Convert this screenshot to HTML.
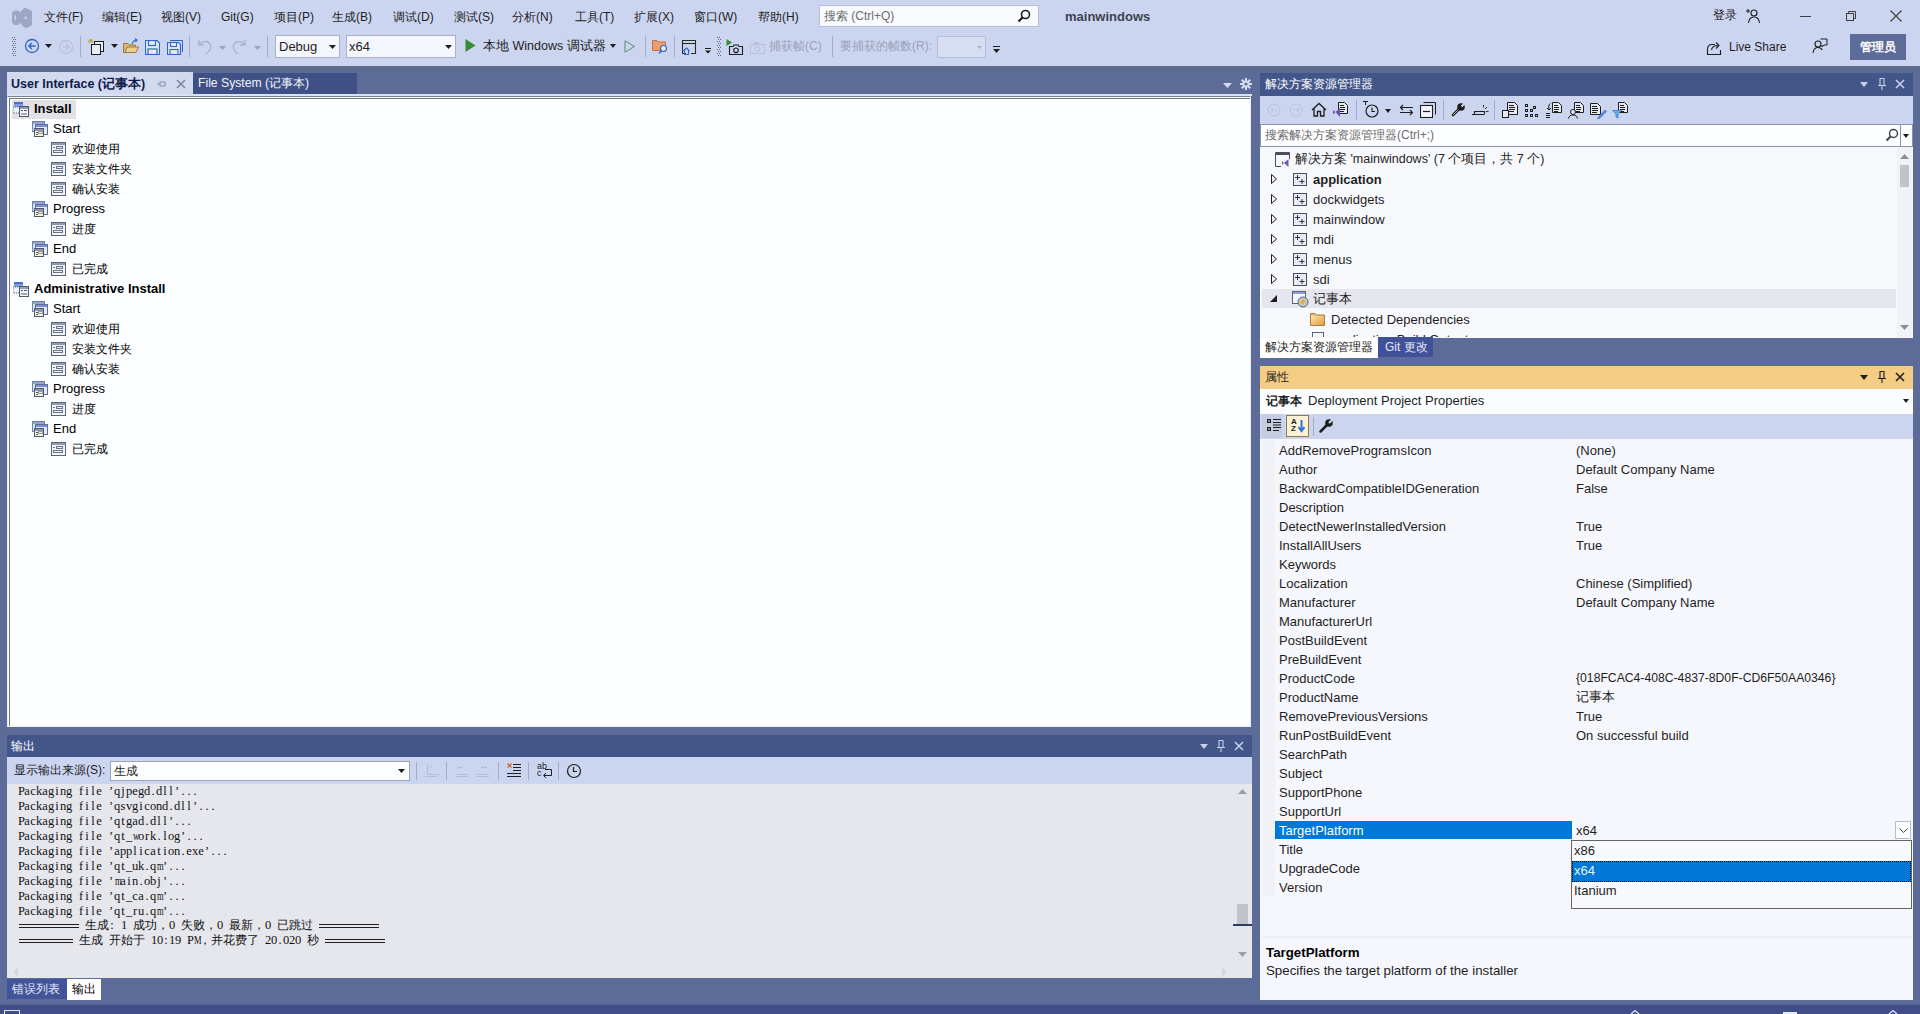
<!DOCTYPE html>
<html><head><meta charset="utf-8">
<style>
*{box-sizing:border-box;margin:0;padding:0}
html,body{width:1920px;height:1014px;overflow:hidden}
body{position:relative;background:#5D6B99;font-family:"Liberation Sans",sans-serif;font-size:13px;color:#1E1E1E}
.a{position:absolute}
.t{position:absolute;white-space:pre;line-height:1}
.mo{font-family:"Liberation Serif",serif;font-size:12.5px;color:#111}
.mo i{font-style:normal;display:inline-block;width:6px;text-align:center}
.mo i.w{transform:scaleX(0.68)}
.mo b{font-weight:normal;display:inline-block;width:12px;text-align:center;font-family:"Liberation Sans",sans-serif;font-size:12px}
</style></head><body>
<!-- command bar -->
<div class="a" style="left:0;top:0;width:1920px;height:66px;background:#CCD5F0"></div>
<div class="a" style="left:0;top:66px;width:1920px;height:7px;background:linear-gradient(#616C8C,#5B6995)"></div>

<!-- CMDBAR CONTENT -->
<svg class="a" style="left:11px;top:7px" width="22" height="22" viewBox="0 0 22 22"><path d="M1 5.5 L3.5 3.5 L7 3.5 L9 5.5 L13 1 L15 1 L21 4 V18 L16 21 L13.5 20.5 L9 16 L7 18 L3.5 18 L1 15.5 Z M3.5 8.5 V13 H5 V8.5 Z M13 10.8 L15.5 8.5 V13 Z" fill="#9EA6C6" fill-rule="evenodd"/></svg>
<div class="t" style="left:44px;top:11px;font-size:12px;color:#1E1E1E">文件(F)</div>
<div class="t" style="left:102px;top:11px;font-size:12px;color:#1E1E1E">编辑(E)</div>
<div class="t" style="left:161px;top:11px;font-size:12px;color:#1E1E1E">视图(V)</div>
<div class="t" style="left:221px;top:11px;font-size:12px;color:#1E1E1E">Git(G)</div>
<div class="t" style="left:274px;top:11px;font-size:12px;color:#1E1E1E">项目(P)</div>
<div class="t" style="left:332px;top:11px;font-size:12px;color:#1E1E1E">生成(B)</div>
<div class="t" style="left:393px;top:11px;font-size:12px;color:#1E1E1E">调试(D)</div>
<div class="t" style="left:454px;top:11px;font-size:12px;color:#1E1E1E">测试(S)</div>
<div class="t" style="left:512px;top:11px;font-size:12px;color:#1E1E1E">分析(N)</div>
<div class="t" style="left:575px;top:11px;font-size:12px;color:#1E1E1E">工具(T)</div>
<div class="t" style="left:634px;top:11px;font-size:12px;color:#1E1E1E">扩展(X)</div>
<div class="t" style="left:694px;top:11px;font-size:12px;color:#1E1E1E">窗口(W)</div>
<div class="t" style="left:758px;top:11px;font-size:12px;color:#1E1E1E">帮助(H)</div>
<div class="a" style="left:819px;top:5px;width:220px;height:22px;background:#F8FAFE;border:1px solid #B4BCD6"></div>
<div class="t" style="left:824px;top:10px;font-size:12px;color:#6D6D6D">搜索 (Ctrl+Q)</div>
<svg class="a" style="left:1017px;top:9px" width="14" height="14" viewBox="0 0 14 14"><circle cx="8.5" cy="5.5" r="4" fill="none" stroke="#1E1E1E" stroke-width="1.6"/><path d="M5.8 8.2 L1.5 12.5" stroke="#1E1E1E" stroke-width="2.2"/></svg>
<div class="t" style="left:1065px;top:10px;font-size:13px;font-weight:bold;color:#3C4250">mainwindows</div>
<div class="t" style="left:1713px;top:9px;font-size:12px;color:#1E1E1E">登录</div>
<svg class="a" style="left:1745px;top:8px" width="16" height="16" viewBox="0 0 16 16"><circle cx="9" cy="5" r="3" fill="none" stroke="#1E1E1E" stroke-width="1.1"/><path d="M3.5 15 C4 10.5 6 9 9 9 C12 9 14 10.5 14.5 15" fill="none" stroke="#1E1E1E" stroke-width="1.1"/><path d="M1 3 H5 M3 1 V5" stroke="#1E1E1E" stroke-width="1"/></svg>
<div class="a" style="left:1800px;top:16px;width:11px;height:1px;background:#3C3C3C"></div>
<svg class="a" style="left:1845px;top:10px" width="12" height="12" viewBox="0 0 12 12"><rect x="1.5" y="3.5" width="7" height="7" fill="none" stroke="#3C3C3C"/><path d="M3.5 3.5 V1.5 H10.5 V8.5 H8.5" fill="none" stroke="#3C3C3C"/></svg>
<svg class="a" style="left:1890px;top:10px" width="12" height="12" viewBox="0 0 12 12"><path d="M0.5 0.5 L11.5 11.5 M11.5 0.5 L0.5 11.5" stroke="#3C3C3C" stroke-width="1.1"/></svg>
<svg class="a" style="left:11px;top:37px" width="6" height="20" viewBox="0 0 6 20"><g fill="#5A6480"><rect x="1" y="0" width="1" height="1"/><rect x="3" y="0" width="1" height="1"/><rect x="2" y="2" width="1" height="1"/><rect x="4" y="2" width="1" height="1"/><rect x="1" y="4" width="1" height="1"/><rect x="3" y="4" width="1" height="1"/><rect x="2" y="6" width="1" height="1"/><rect x="4" y="6" width="1" height="1"/><rect x="1" y="8" width="1" height="1"/><rect x="3" y="8" width="1" height="1"/><rect x="2" y="10" width="1" height="1"/><rect x="4" y="10" width="1" height="1"/><rect x="1" y="12" width="1" height="1"/><rect x="3" y="12" width="1" height="1"/><rect x="2" y="14" width="1" height="1"/><rect x="4" y="14" width="1" height="1"/><rect x="1" y="16" width="1" height="1"/><rect x="3" y="16" width="1" height="1"/><rect x="2" y="18" width="1" height="1"/><rect x="4" y="18" width="1" height="1"/></g></svg>
<svg class="a" style="left:24px;top:38px" width="16" height="16" viewBox="0 0 16 16"><circle cx="8" cy="8" r="6.5" fill="none" stroke="#2D66C4" stroke-width="1.3"/><path d="M11.5 8 H5 M7.8 5 L4.8 8 L7.8 11" fill="none" stroke="#2D66C4" stroke-width="1.3"/></svg>
<svg class="a" style="left:45px;top:44px" width="7" height="4"><path d="M0 0 H7 L3.5 4 Z" fill="#1E1E1E"/></svg>
<svg class="a" style="left:58px;top:39px" width="16" height="16" viewBox="0 0 16 16"><circle cx="8" cy="8" r="6.5" fill="none" stroke="#B9C0D6" stroke-width="1.3"/><path d="M4.5 8 H11 M8.2 5 L11.2 8 L8.2 11" fill="none" stroke="#B9C0D6" stroke-width="1.3"/></svg>
<div class="a" style="left:80px;top:36px;width:1px;height:21px;background:#A4ADC8"></div>
<svg class="a" style="left:88px;top:38px" width="18" height="17" viewBox="0 0 18 17"><path d="M2 1 L4 5 M0 3 H5 M4 1 L1 5" stroke="#C39A2A" stroke-width="1"/><rect x="6.5" y="3.5" width="9" height="10" fill="#E8ECF6" stroke="#1E1E1E"/><rect x="3.5" y="6.5" width="9" height="10" fill="#E8ECF6" stroke="#1E1E1E"/></svg>
<svg class="a" style="left:111px;top:44px" width="7" height="4"><path d="M0 0 H7 L3.5 4 Z" fill="#1E1E1E"/></svg>
<svg class="a" style="left:123px;top:38px" width="16" height="16" viewBox="0 0 16 16"><path d="M0.5 5.5 H5 L6 7 H12.5 V14.5 H0.5 Z" fill="#DCB67A" stroke="#9C7A3C"/><path d="M2 14.5 L4 9 H15.5 L13 14.5 Z" fill="#F0CC8A" stroke="#9C7A3C"/><path d="M9 6 C10 3 12 2 14 2 M12 0.5 L14 2 L12.5 4" fill="none" stroke="#2D66C4" stroke-width="1.2"/></svg>
<svg class="a" style="left:145px;top:40px" width="15" height="15" viewBox="0 0 15 15"><path d="M0.5 0.5 H12 L14.5 3 V14.5 H0.5 Z" fill="#E4EAF8" stroke="#2D66C4" stroke-width="1.2"/><rect x="3.5" y="0.5" width="7" height="5" fill="none" stroke="#2D66C4" stroke-width="1.2"/><rect x="3" y="9" width="9" height="5.5" fill="none" stroke="#2D66C4" stroke-width="1.2"/></svg>
<svg class="a" style="left:167px;top:40px" width="16" height="15" viewBox="0 0 16 15"><path d="M3 0.5 H15.5 V12" fill="none" stroke="#2D66C4" stroke-width="1"/><path d="M0.5 2.5 H11.5 L13.5 4.5 V14.5 H0.5 Z" fill="#E4EAF8" stroke="#2D66C4" stroke-width="1.2"/><rect x="3.5" y="2.5" width="6" height="4" fill="none" stroke="#2D66C4" stroke-width="1.1"/><rect x="3" y="9.5" width="8" height="5" fill="none" stroke="#2D66C4" stroke-width="1.1"/></svg>
<div class="a" style="left:189px;top:36px;width:1px;height:21px;background:#A4ADC8"></div>
<svg class="a" style="left:198px;top:39px" width="14" height="16" viewBox="0 0 14 16"><path d="M1 1 V6 H6 M1.5 5.5 C4 2 9 1.5 11.5 4.5 C14 8 12 12 8 15" fill="none" stroke="#A9B2CC" stroke-width="1.3"/></svg>
<svg class="a" style="left:219px;top:46px" width="7" height="4"><path d="M0 0 H7 L3.5 4 Z" fill="#9AA3BE"/></svg>
<svg class="a" style="left:232px;top:39px" width="14" height="16" viewBox="0 0 14 16"><path d="M13 1 V6 H8 M12.5 5.5 C10 2 5 1.5 2.5 4.5 C0 8 2 12 6 15" fill="none" stroke="#A9B2CC" stroke-width="1.3"/></svg>
<svg class="a" style="left:254px;top:46px" width="7" height="4"><path d="M0 0 H7 L3.5 4 Z" fill="#9AA3BE"/></svg>
<div class="a" style="left:267px;top:36px;width:1px;height:21px;background:#A4ADC8"></div>
<div class="a" style="left:275px;top:35px;width:65px;height:23px;background:#F4F7FD;border:1px solid #A9B0C8"></div>
<div class="t" style="left:279px;top:40px;font-size:13px;color:#1E1E1E">Debug</div>
<svg class="a" style="left:329px;top:45px" width="7" height="4"><path d="M0 0 H7 L3.5 4 Z" fill="#1E1E1E"/></svg>
<div class="a" style="left:346px;top:35px;width:110px;height:23px;background:#F4F7FD;border:1px solid #A9B0C8"></div>
<div class="t" style="left:349px;top:40px;font-size:13px;color:#1E1E1E">x64</div>
<svg class="a" style="left:445px;top:45px" width="7" height="4"><path d="M0 0 H7 L3.5 4 Z" fill="#1E1E1E"/></svg>
<svg class="a" style="left:465px;top:39px" width="11" height="13"><path d="M0.5 0 L10.5 6.5 L0.5 13 Z" fill="#388A34"/></svg>
<div class="t" style="left:483px;top:40px;font-size:12.5px;color:#1E1E1E">本地 Windows 调试器</div>
<svg class="a" style="left:610px;top:44px" width="6" height="4"><path d="M0 0 H6 L3 4 Z" fill="#1E1E1E"/></svg>
<svg class="a" style="left:624px;top:40px" width="12" height="13"><path d="M1 0.8 L10.5 6.5 L1 12.2 Z" fill="none" stroke="#5C8C6A" stroke-width="1"/></svg>
<div class="a" style="left:645px;top:36px;width:1px;height:21px;background:#A4ADC8"></div>
<svg class="a" style="left:652px;top:39px" width="17" height="16" viewBox="0 0 17 16"><path d="M0.5 1.5 H5 L6.5 3 H13.5 V11.5 H0.5 Z" fill="#E8A070" stroke="#C07040"/><circle cx="11.5" cy="9.5" r="3" fill="#E4ECF8" stroke="#2D66C4" stroke-width="1.1"/><path d="M9.5 11.5 L7 14.5" stroke="#2D66C4" stroke-width="1.3"/></svg>
<div class="a" style="left:674px;top:36px;width:1px;height:21px;background:#A4ADC8"></div>
<svg class="a" style="left:682px;top:40px" width="16" height="15" viewBox="0 0 16 15"><path d="M4 13.5 H0.5 V0.5 H13.5 V13.5 H9" fill="none" stroke="#2A2A2A" stroke-width="1.1"/><path d="M0.5 3.5 H13.5" stroke="#2A2A2A" stroke-width="1.1"/><path d="M1.5 11 L4.5 8 L7.5 11 M2.5 10 V14.5 H6.5 V10" fill="none" stroke="#2D66C4" stroke-width="1.1"/></svg>
<svg class="a" style="left:705px;top:48px" width="6" height="6"><path d="M0 0.5 H6" stroke="#1E1E1E"/><path d="M0 2.5 H6 L3 5.5 Z" fill="#1E1E1E"/></svg>
<svg class="a" style="left:716px;top:37px" width="6" height="20" viewBox="0 0 6 20"><g fill="#5A6480"><rect x="1" y="0" width="1" height="1"/><rect x="3" y="0" width="1" height="1"/><rect x="2" y="2" width="1" height="1"/><rect x="4" y="2" width="1" height="1"/><rect x="1" y="4" width="1" height="1"/><rect x="3" y="4" width="1" height="1"/><rect x="2" y="6" width="1" height="1"/><rect x="4" y="6" width="1" height="1"/><rect x="1" y="8" width="1" height="1"/><rect x="3" y="8" width="1" height="1"/><rect x="2" y="10" width="1" height="1"/><rect x="4" y="10" width="1" height="1"/><rect x="1" y="12" width="1" height="1"/><rect x="3" y="12" width="1" height="1"/><rect x="2" y="14" width="1" height="1"/><rect x="4" y="14" width="1" height="1"/><rect x="1" y="16" width="1" height="1"/><rect x="3" y="16" width="1" height="1"/><rect x="2" y="18" width="1" height="1"/><rect x="4" y="18" width="1" height="1"/></g></svg>
<svg class="a" style="left:726px;top:39px" width="18" height="16" viewBox="0 0 18 16"><path d="M0.5 0 L6 3.5 L0.5 7 Z" fill="#388A34"/><path d="M3.5 15.5 V7.5 H7 L8 6 H12 L13 7.5 H16.5 V15.5 Z" fill="none" stroke="#1E1E1E" stroke-width="1.1"/><circle cx="10" cy="11.3" r="2.3" fill="none" stroke="#1E1E1E" stroke-width="1.1"/></svg>
<svg class="a" style="left:750px;top:41px" width="15" height="13" viewBox="0 0 15 13"><rect x="0.5" y="3.5" width="14" height="9" fill="none" stroke="#B9C0D6"/><rect x="4" y="1" width="5" height="2" fill="#B9C0D6"/><circle cx="7.5" cy="8" r="2.5" fill="none" stroke="#B9C0D6"/></svg>
<div class="t" style="left:769px;top:40px;font-size:12px;color:#9AA1B8">捕获帧(C)</div>
<div class="a" style="left:832px;top:36px;width:1px;height:21px;background:#A4ADC8"></div>
<div class="t" style="left:840px;top:40px;font-size:12px;color:#9AA1B8">要捕获的帧数(R):</div>
<div class="a" style="left:937px;top:36px;width:49px;height:22px;background:#D8DEF2;border:1px solid #B4BCD6"></div>
<svg class="a" style="left:977px;top:46px" width="5" height="3"><path d="M0 0 H5 L2.5 3 Z" fill="#A9B0C8"/></svg>
<svg class="a" style="left:993px;top:46px" width="7" height="8"><path d="M0 0.5 H7" stroke="#1E1E1E"/><path d="M0 3 H7 L3.5 7 Z" fill="#1E1E1E"/></svg>
<svg class="a" style="left:1706px;top:40px" width="17" height="15" viewBox="0 0 17 15"><path d="M9 4.5 H6 C3 4.5 1.5 6.5 1.5 9 V14.5 H14.5 V10" fill="none" stroke="#1E1E1E" stroke-width="1.1"/><path d="M5.5 10 C6 7 8 5.5 12 5.5 M10 2.5 L13 5.5 L10 8.5" fill="none" stroke="#1E1E1E" stroke-width="1.1"/></svg>
<div class="t" style="left:1729px;top:41px;font-size:12px;color:#1E1E1E">Live Share</div>
<svg class="a" style="left:1812px;top:38px" width="16" height="16" viewBox="0 0 16 16"><circle cx="6" cy="6" r="3" fill="none" stroke="#1E1E1E" stroke-width="1.1"/><path d="M1 15 C1.5 11 3 9.5 6 9.5 C8 9.5 9.5 10.5 10 12" fill="none" stroke="#1E1E1E" stroke-width="1.1"/><path d="M8.5 1 H15 V7 H12 L10 9 V7" fill="none" stroke="#1E1E1E" stroke-width="1"/></svg>
<div class="a" style="left:1850px;top:34px;width:56px;height:26px;background:#5D6B99"></div>
<div class="t" style="left:1860px;top:41px;font-size:12px;font-weight:bold;color:#FFFFFF">管理员</div>

<!-- document well -->
<div class="a" id="docwell" style="left:7px;top:72px;width:1245px;height:655px;background:#5D6B99">
</div>
<!-- selected doc tab -->
<div class="a" style="left:7px;top:72px;width:186px;height:23px;background:#D3DAF0"></div>
<div class="a" style="left:193px;top:73px;width:164px;height:21px;background:#3E5086"></div>
<div class="a" style="left:7px;top:94px;width:1245px;height:2px;background:#DCE2F4"></div>
<div class="a" style="left:7px;top:96px;width:1244px;height:631px;background:#FDFEFF;border-top:1px solid #7A8090;border-left:1px solid #E8ECF8;border-right:1px solid #E8ECF8;border-bottom:1px solid #F0F2FA"></div>
<div class="a" style="left:9px;top:98px;width:1241px;height:628px;background:#FDFEFF;border-top:1px solid #6C7A72;border-left:1px solid #6C7A72"></div>

<!-- DOC CONTENT -->
<svg width="0" height="0" style="position:absolute">
<defs>
<g id="ic2"><rect x="0.5" y="0.5" width="14" height="13" fill="#F2F4F8" stroke="#5A6478"/><rect x="1" y="1" width="13" height="2" fill="#8E9CB8"/><rect x="5.5" y="4.5" width="6" height="2" fill="none" stroke="#6A7488"/><rect x="2" y="5" width="2" height="1" fill="#6A7488"/><rect x="2.5" y="8.5" width="9" height="2" fill="none" stroke="#6A7488"/></g>
<g id="ic1"><rect x="0.5" y="0.5" width="12" height="10" fill="#DCE6F8" stroke="#6E82AC"/><rect x="1" y="1" width="11" height="2" fill="#90A6D0"/><rect x="3.5" y="3.5" width="12" height="10" fill="#E4ECFA" stroke="#5C6EA0"/><rect x="4" y="4" width="11" height="2" fill="#7D8FD0"/><rect x="2.5" y="7.5" width="9" height="8" fill="#F2F2DE" stroke="#4E5868"/><rect x="3" y="8" width="8" height="2" fill="#8A96B8"/><rect x="4" y="11" width="2" height="1" fill="#4E5868"/><rect x="6.5" y="10.5" width="4" height="2" fill="none" stroke="#9AA080"/><rect x="4" y="13" width="2" height="1" fill="#4E5868"/></g>
<g id="ic0"><rect x="1" y="0" width="9" height="7" fill="#7E9EE0"/><rect x="1" y="0" width="9" height="2" fill="#4E6EC8"/><rect x="0" y="5" width="7" height="6" fill="#EEF2FA" stroke="#5A6478" stroke-dasharray="1 1"/><rect x="6.5" y="4.5" width="9" height="10" fill="#F4F6FA" stroke="#4E5868"/><rect x="7" y="5" width="8" height="2" fill="#8E9CB8"/><rect x="8" y="8" width="2" height="1" fill="#4E5868"/><rect x="11" y="8" width="3" height="1" fill="#4E5868"/><rect x="8" y="11" width="6" height="2" fill="#A0A8B8"/></g>
</defs></svg>
<div class="t" style="left:11px;top:78px;font-size:12.5px;font-weight:bold;color:#0E1C4C">User Interface (记事本)</div>
<svg class="a" style="left:157px;top:79px" width="10" height="10" viewBox="0 0 10 10"><path d="M0 5 H3 M3 2.5 V7.5 M3 3 H8 V7 H3 M8 5 H9" fill="none" stroke="#8890A8" stroke-width="1"/></svg>
<svg class="a" style="left:176px;top:79px" width="10" height="10" viewBox="0 0 10 10"><path d="M1 1 L9 9 M9 1 L1 9" stroke="#7E859C" stroke-width="1.6"/></svg>
<div class="t" style="left:198px;top:77px;font-size:12.2px;color:#F2F4FC">File System (记事本)</div>
<svg class="a" style="left:1223px;top:83px" width="9" height="5"><path d="M0 0 H9 L4.5 5 Z" fill="#D6DCF2"/></svg>
<svg class="a" style="left:1240px;top:78px" width="12" height="12" viewBox="0 0 12 12"><g fill="#D6DCF2"><circle cx="6" cy="6" r="3.6"/><rect x="5" y="0" width="2" height="12"/><rect x="0" y="5" width="12" height="2"/><rect x="5" y="0" width="2" height="12" transform="rotate(45 6 6)"/><rect x="5" y="0" width="2" height="12" transform="rotate(-45 6 6)"/></g><circle cx="6" cy="6" r="1.6" fill="#5D6B99"/></svg>
<div class="a" style="left:12px;top:100px;width:64px;height:19px;background:#E2E2E6"></div>
<svg class="a" style="left:13px;top:102px" width="16" height="16"><use href="#ic0"/></svg>
<div class="t" style="left:34px;top:102px;font-size:13px;font-weight:bold;color:#000">Install</div>
<svg class="a" style="left:32px;top:121px" width="16" height="16"><use href="#ic1"/></svg>
<div class="t" style="left:53px;top:122px;font-size:13px;color:#000">Start</div>
<svg class="a" style="left:51px;top:142px" width="15" height="14"><use href="#ic2"/></svg>
<div class="t" style="left:72px;top:143px;font-size:12px;color:#000">欢迎使用</div>
<svg class="a" style="left:51px;top:162px" width="15" height="14"><use href="#ic2"/></svg>
<div class="t" style="left:72px;top:163px;font-size:12px;color:#000">安装文件夹</div>
<svg class="a" style="left:51px;top:182px" width="15" height="14"><use href="#ic2"/></svg>
<div class="t" style="left:72px;top:183px;font-size:12px;color:#000">确认安装</div>
<svg class="a" style="left:32px;top:201px" width="16" height="16"><use href="#ic1"/></svg>
<div class="t" style="left:53px;top:202px;font-size:13px;color:#000">Progress</div>
<svg class="a" style="left:51px;top:222px" width="15" height="14"><use href="#ic2"/></svg>
<div class="t" style="left:72px;top:223px;font-size:12px;color:#000">进度</div>
<svg class="a" style="left:32px;top:241px" width="16" height="16"><use href="#ic1"/></svg>
<div class="t" style="left:53px;top:242px;font-size:13px;color:#000">End</div>
<svg class="a" style="left:51px;top:262px" width="15" height="14"><use href="#ic2"/></svg>
<div class="t" style="left:72px;top:263px;font-size:12px;color:#000">已完成</div>
<svg class="a" style="left:13px;top:282px" width="16" height="16"><use href="#ic0"/></svg>
<div class="t" style="left:34px;top:282px;font-size:13px;font-weight:bold;color:#000">Administrative Install</div>
<svg class="a" style="left:32px;top:301px" width="16" height="16"><use href="#ic1"/></svg>
<div class="t" style="left:53px;top:302px;font-size:13px;color:#000">Start</div>
<svg class="a" style="left:51px;top:322px" width="15" height="14"><use href="#ic2"/></svg>
<div class="t" style="left:72px;top:323px;font-size:12px;color:#000">欢迎使用</div>
<svg class="a" style="left:51px;top:342px" width="15" height="14"><use href="#ic2"/></svg>
<div class="t" style="left:72px;top:343px;font-size:12px;color:#000">安装文件夹</div>
<svg class="a" style="left:51px;top:362px" width="15" height="14"><use href="#ic2"/></svg>
<div class="t" style="left:72px;top:363px;font-size:12px;color:#000">确认安装</div>
<svg class="a" style="left:32px;top:381px" width="16" height="16"><use href="#ic1"/></svg>
<div class="t" style="left:53px;top:382px;font-size:13px;color:#000">Progress</div>
<svg class="a" style="left:51px;top:402px" width="15" height="14"><use href="#ic2"/></svg>
<div class="t" style="left:72px;top:403px;font-size:12px;color:#000">进度</div>
<svg class="a" style="left:32px;top:421px" width="16" height="16"><use href="#ic1"/></svg>
<div class="t" style="left:53px;top:422px;font-size:13px;color:#000">End</div>
<svg class="a" style="left:51px;top:442px" width="15" height="14"><use href="#ic2"/></svg>
<div class="t" style="left:72px;top:443px;font-size:12px;color:#000">已完成</div>

<!-- output panel -->
<div class="a" style="left:7px;top:735px;width:1245px;height:22px;background:#43568A"></div>
<div class="a" style="left:7px;top:757px;width:1245px;height:27px;background:#CCD5F0"></div>
<div class="a" style="left:7px;top:784px;width:1245px;height:194px;background:#E6E7EC"></div>
<div class="a" style="left:7px;top:979px;width:60px;height:20px;background:#42559A"></div>
<div class="a" style="left:67px;top:979px;width:34px;height:21px;background:#FFFFFF"></div>

<!-- OUTPUT CONTENT -->
<div class="t" style="left:11px;top:740px;font-size:12px;color:#FFFFFF">输出</div>
<svg class="a" style="left:1200px;top:744px" width="8" height="5"><path d="M0 0 H8 L4 5 Z" fill="#C8D0EC"/></svg>
<svg class="a" style="left:1216px;top:740px" width="10" height="12" viewBox="0 0 10 12"><path d="M2.5 0.5 H7.5 M3 0.5 V7 M7 0.5 V7 M1 7.5 H9 M5 7.5 V12" fill="none" stroke="#C8D0EC" stroke-width="1.1"/></svg>
<svg class="a" style="left:1234px;top:741px" width="10" height="10" viewBox="0 0 10 10"><path d="M1 1 L9 9 M9 1 L1 9" stroke="#C8D0EC" stroke-width="1.6"/></svg>
<div class="t" style="left:14px;top:764px;font-size:12px;color:#1E1E1E">显示输出来源(S):</div>
<div class="a" style="left:110px;top:761px;width:300px;height:20px;background:#FCFDFF;border:1px solid #9CA4BC"></div>
<div class="t" style="left:114px;top:765px;font-size:12px;color:#1E1E1E">生成</div>
<svg class="a" style="left:398px;top:769px" width="7" height="4"><path d="M0 0 H7 L3.5 4 Z" fill="#1E1E1E"/></svg>
<div class="a" style="left:416px;top:762px;width:1px;height:18px;background:#A4ADC8"></div>
<svg class="a" style="left:424px;top:764px" width="16" height="14" viewBox="0 0 16 14"><path d="M3.5 0 V10.5 H15 M6 4 L8 1.5 M1 12.5 H13" fill="none" stroke="#B4BCD2" stroke-width="1"/></svg>
<div class="a" style="left:446px;top:762px;width:1px;height:18px;background:#A4ADC8"></div>
<svg class="a" style="left:455px;top:765px" width="14" height="14" viewBox="0 0 14 14"><path d="M4 2.5 H8 M2 4 L4 2.5 L2 1 M1 9.5 H13 M1 11.5 H13" fill="none" stroke="#B4BCD2" stroke-width="1"/></svg>
<svg class="a" style="left:476px;top:765px" width="14" height="14" viewBox="0 0 14 14"><path d="M5 2.5 H11 M9 1 L11 2.5 L9 4 M1 9.5 H13 M1 11.5 H13" fill="none" stroke="#B4BCD2" stroke-width="1"/></svg>
<div class="a" style="left:498px;top:762px;width:1px;height:18px;background:#A4ADC8"></div>
<svg class="a" style="left:507px;top:763px" width="15" height="15" viewBox="0 0 15 15"><path d="M0.5 0.5 L4.5 4.5 M4.5 0.5 L0.5 4.5" stroke="#D2541E" stroke-width="1.1"/><path d="M6 1.5 H14 M6 4.5 H14 M6 7.5 H14 M0 10.5 H14 M0 13.5 H14" stroke="#1E1E1E" stroke-width="1"/></svg>
<div class="a" style="left:528px;top:762px;width:1px;height:18px;background:#A4ADC8"></div>
<div class="t" style="left:537px;top:763px;font-size:9px;color:#1E1E1E;line-height:7px">ab<br>c</div>
<svg class="a" style="left:541px;top:767px" width="12" height="11" viewBox="0 0 12 11"><path d="M4 2.5 H10.5 V8.5 H3 M5 6 L2.5 8.5 L5 11" fill="none" stroke="#1E1E1E" stroke-width="1"/></svg>
<div class="a" style="left:558px;top:762px;width:1px;height:18px;background:#A4ADC8"></div>
<svg class="a" style="left:566px;top:763px" width="16" height="16" viewBox="0 0 16 16"><circle cx="8" cy="8" r="6.5" fill="none" stroke="#1E1E1E" stroke-width="1.2"/><path d="M7.5 4 V8.5 H11" fill="none" stroke="#1E1E1E" stroke-width="1.2"/></svg>
<div class="t mo" style="left:18px;top:785px"><i>P</i><i>a</i><i>c</i><i>k</i><i>a</i><i>g</i><i>i</i><i>n</i><i>g</i><i>&nbsp;</i><i>f</i><i>i</i><i>l</i><i>e</i><i>&nbsp;</i><i>’</i><i>q</i><i>j</i><i>p</i><i>e</i><i>g</i><i>d</i><i>.</i><i>d</i><i>l</i><i>l</i><i>’</i><i>.</i><i>.</i><i>.</i></div>
<div class="t mo" style="left:18px;top:800px"><i>P</i><i>a</i><i>c</i><i>k</i><i>a</i><i>g</i><i>i</i><i>n</i><i>g</i><i>&nbsp;</i><i>f</i><i>i</i><i>l</i><i>e</i><i>&nbsp;</i><i>’</i><i>q</i><i>s</i><i>v</i><i>g</i><i>i</i><i>c</i><i>o</i><i>n</i><i>d</i><i>.</i><i>d</i><i>l</i><i>l</i><i>’</i><i>.</i><i>.</i><i>.</i></div>
<div class="t mo" style="left:18px;top:815px"><i>P</i><i>a</i><i>c</i><i>k</i><i>a</i><i>g</i><i>i</i><i>n</i><i>g</i><i>&nbsp;</i><i>f</i><i>i</i><i>l</i><i>e</i><i>&nbsp;</i><i>’</i><i>q</i><i>t</i><i>g</i><i>a</i><i>d</i><i>.</i><i>d</i><i>l</i><i>l</i><i>’</i><i>.</i><i>.</i><i>.</i></div>
<div class="t mo" style="left:18px;top:830px"><i>P</i><i>a</i><i>c</i><i>k</i><i>a</i><i>g</i><i>i</i><i>n</i><i>g</i><i>&nbsp;</i><i>f</i><i>i</i><i>l</i><i>e</i><i>&nbsp;</i><i>’</i><i>q</i><i>t</i><i>_</i><i class="w">w</i><i>o</i><i>r</i><i>k</i><i>.</i><i>l</i><i>o</i><i>g</i><i>’</i><i>.</i><i>.</i><i>.</i></div>
<div class="t mo" style="left:18px;top:845px"><i>P</i><i>a</i><i>c</i><i>k</i><i>a</i><i>g</i><i>i</i><i>n</i><i>g</i><i>&nbsp;</i><i>f</i><i>i</i><i>l</i><i>e</i><i>&nbsp;</i><i>’</i><i>a</i><i>p</i><i>p</i><i>l</i><i>i</i><i>c</i><i>a</i><i>t</i><i>i</i><i>o</i><i>n</i><i>.</i><i>e</i><i>x</i><i>e</i><i>’</i><i>.</i><i>.</i><i>.</i></div>
<div class="t mo" style="left:18px;top:860px"><i>P</i><i>a</i><i>c</i><i>k</i><i>a</i><i>g</i><i>i</i><i>n</i><i>g</i><i>&nbsp;</i><i>f</i><i>i</i><i>l</i><i>e</i><i>&nbsp;</i><i>’</i><i>q</i><i>t</i><i>_</i><i>u</i><i>k</i><i>.</i><i>q</i><i class="w">m</i><i>’</i><i>.</i><i>.</i><i>.</i></div>
<div class="t mo" style="left:18px;top:875px"><i>P</i><i>a</i><i>c</i><i>k</i><i>a</i><i>g</i><i>i</i><i>n</i><i>g</i><i>&nbsp;</i><i>f</i><i>i</i><i>l</i><i>e</i><i>&nbsp;</i><i>’</i><i class="w">m</i><i>a</i><i>i</i><i>n</i><i>.</i><i>o</i><i>b</i><i>j</i><i>’</i><i>.</i><i>.</i><i>.</i></div>
<div class="t mo" style="left:18px;top:890px"><i>P</i><i>a</i><i>c</i><i>k</i><i>a</i><i>g</i><i>i</i><i>n</i><i>g</i><i>&nbsp;</i><i>f</i><i>i</i><i>l</i><i>e</i><i>&nbsp;</i><i>’</i><i>q</i><i>t</i><i>_</i><i>c</i><i>a</i><i>.</i><i>q</i><i class="w">m</i><i>’</i><i>.</i><i>.</i><i>.</i></div>
<div class="t mo" style="left:18px;top:905px"><i>P</i><i>a</i><i>c</i><i>k</i><i>a</i><i>g</i><i>i</i><i>n</i><i>g</i><i>&nbsp;</i><i>f</i><i>i</i><i>l</i><i>e</i><i>&nbsp;</i><i>’</i><i>q</i><i>t</i><i>_</i><i>r</i><i>u</i><i>.</i><i>q</i><i class="w">m</i><i>’</i><i>.</i><i>.</i><i>.</i></div>
<div class="a" style="left:19px;top:924px;width:60px;height:4px;border-top:1px solid #1E1E1E;border-bottom:1px solid #1E1E1E"></div>
<div class="a" style="left:319px;top:924px;width:60px;height:4px;border-top:1px solid #1E1E1E;border-bottom:1px solid #1E1E1E"></div>
<div class="a" style="left:19px;top:939px;width:54px;height:4px;border-top:1px solid #1E1E1E;border-bottom:1px solid #1E1E1E"></div>
<div class="a" style="left:325px;top:939px;width:60px;height:4px;border-top:1px solid #1E1E1E;border-bottom:1px solid #1E1E1E"></div>
<div class="t mo" style="left:85px;top:919px"><b>生</b><b>成</b><i>:</i><i>&nbsp;</i><i>1</i><i>&nbsp;</i><b>成</b><b>功</b><b>，</b><i>0</i><i>&nbsp;</i><b>失</b><b>败</b><b>，</b><i>0</i><i>&nbsp;</i><b>最</b><b>新</b><b>，</b><i>0</i><i>&nbsp;</i><b>已</b><b>跳</b><b>过</b></div>
<div class="t mo" style="left:79px;top:934px"><b>生</b><b>成</b><i>&nbsp;</i><b>开</b><b>始</b><b>于</b><i>&nbsp;</i><i>1</i><i>0</i><i>:</i><i>1</i><i>9</i><i>&nbsp;</i><i>P</i><i class="w">M</i><b>，</b><b>并</b><b>花</b><b>费</b><b>了</b><i>&nbsp;</i><i>2</i><i>0</i><i>.</i><i>0</i><i>2</i><i>0</i><i>&nbsp;</i><b>秒</b></div>
<svg class="a" style="left:1238px;top:789px" width="9" height="5"><path d="M0 5 L4.5 0 L9 5 Z" fill="#9A9EA8"/></svg>
<div class="a" style="left:1237px;top:904px;width:11px;height:20px;background:#C2C3C9"></div>
<div class="a" style="left:1233px;top:924px;width:19px;height:2px;background:#2E3C6C"></div>
<svg class="a" style="left:1238px;top:952px" width="9" height="5"><path d="M0 0 L4.5 5 L9 0 Z" fill="#9A9EA8"/></svg>
<svg class="a" style="left:13px;top:968px" width="5" height="9"><path d="M5 0 L0 4.5 L5 9 Z" fill="#D4D6DC"/></svg>
<svg class="a" style="left:1222px;top:968px" width="5" height="9"><path d="M0 0 L5 4.5 L0 9 Z" fill="#D4D6DC"/></svg>
<div class="t" style="left:12px;top:983px;font-size:12px;color:#E4E8F8">错误列表</div>
<div class="t" style="left:72px;top:983px;font-size:12px;color:#000">输出</div>

<!-- solution explorer -->
<div class="a" style="left:1260px;top:73px;width:653px;height:23px;background:#43568A"></div>
<div class="a" style="left:1260px;top:96px;width:653px;height:28px;background:#CCD5F0"></div>
<div class="a" style="left:1260px;top:124px;width:653px;height:23px;background:#FDFEFF;border:1px solid #8A93A8"></div>
<div class="a" style="left:1260px;top:147px;width:653px;height:191px;background:#F7F8FC"></div>
<div class="a" style="left:1260px;top:338px;width:118px;height:20px;background:#FFFFFF"></div>
<div class="a" style="left:1378px;top:337px;width:55px;height:20px;background:#40519A"></div>

<!-- SE CONTENT -->
<div class="t" style="left:1265px;top:78px;font-size:12px;color:#FFFFFF">解决方案资源管理器</div>
<svg class="a" style="left:1860px;top:82px" width="8" height="5"><path d="M0 0 H8 L4 5 Z" fill="#C8D0EC"/></svg>
<svg class="a" style="left:1877px;top:78px" width="10" height="12" viewBox="0 0 10 12"><path d="M2.5 0.5 H7.5 M3 0.5 V7 M7 0.5 V7 M1 7.5 H9 M5 7.5 V12" fill="none" stroke="#C8D0EC" stroke-width="1.1"/></svg>
<svg class="a" style="left:1895px;top:79px" width="10" height="10" viewBox="0 0 10 10"><path d="M1 1 L9 9 M9 1 L1 9" stroke="#C8D0EC" stroke-width="1.6"/></svg>
<svg class="a" style="left:1267px;top:103px" width="14" height="14" viewBox="0 0 14 14"><circle cx="7" cy="7" r="6" fill="none" stroke="#BAC2DA" stroke-width="1"/><path d="M10 7 H4 M6 5 L4 7 L6 9" fill="none" stroke="#BAC2DA"/></svg>
<svg class="a" style="left:1289px;top:103px" width="14" height="14" viewBox="0 0 14 14"><circle cx="7" cy="7" r="6" fill="none" stroke="#BAC2DA" stroke-width="1"/><path d="M4 7 H10 M8 5 L10 7 L8 9" fill="none" stroke="#BAC2DA"/></svg>
<svg class="a" style="left:1311px;top:102px" width="16" height="15" viewBox="0 0 16 15"><path d="M1 8 L8 1.5 L15 8 M3 6.5 V14 H6.5 V9.5 H9.5 V14 H13 V6.5" fill="none" stroke="#1E1E1E" stroke-width="1.3"/></svg>
<svg class="a" style="left:1332px;top:102px" width="17" height="16" viewBox="0 0 17 16"><path d="M6.5 0.5 H12.5 L15.5 3.5 V11.5 H6.5 Z" fill="#E6E9F2" stroke="#1E1E1E"/><path d="M8 3.5 H12 M8 5.5 H13 M8 7.5 H13 M8 9.5 H12" stroke="#1E1E1E" stroke-width="1"/><path d="M1 8 L3.5 10 L1 12.5 Z M3.5 10 L8 6 V15 Z" fill="#6F4FB8"/></svg>
<div class="a" style="left:1356px;top:100px;width:1px;height:20px;background:#A4ADC8"></div>
<svg class="a" style="left:1363px;top:101px" width="16" height="17" viewBox="0 0 16 17"><circle cx="9" cy="10" r="6" fill="none" stroke="#1E1E1E" stroke-width="1.2"/><path d="M9 6.5 V10.5 H12" fill="none" stroke="#1E1E1E" stroke-width="1.1"/><path d="M0 0.5 H5 M2.5 0.5 V4" stroke="#1E1E1E"/></svg>
<svg class="a" style="left:1385px;top:109px" width="6" height="4"><path d="M0 0 H6 L3 4 Z" fill="#1E1E1E"/></svg>
<svg class="a" style="left:1399px;top:104px" width="15" height="12" viewBox="0 0 15 12"><path d="M14 3.5 H1.5 M4 1 L1.5 3.5 L4 6 M1 8.5 H13.5 M11 6 L13.5 8.5 L11 11" fill="none" stroke="#1E1E1E" stroke-width="1.2"/></svg>
<svg class="a" style="left:1420px;top:102px" width="16" height="16" viewBox="0 0 16 16"><rect x="0.5" y="3.5" width="12" height="12" fill="#F4F7FD" stroke="#1E1E1E" stroke-width="1.1"/><path d="M3.5 0.5 H15.5 V12.5" fill="none" stroke="#1E1E1E"/><path d="M3 9.5 H10" stroke="#1E1E1E" stroke-width="1.2"/></svg>
<div class="a" style="left:1443px;top:100px;width:1px;height:20px;background:#A4ADC8"></div>
<svg class="a" style="left:1451px;top:102px" width="15" height="15" viewBox="0 0 15 15"><path d="M2 13 L7.5 7.5" stroke="#1E1E1E" stroke-width="2.6" stroke-linecap="round"/><path d="M2 13 L7.5 7.5" stroke="#C8CEDC" stroke-width="0.8"/><circle cx="10" cy="5" r="3.8" fill="#1E1E1E"/><path d="M10.5 4.5 L13.5 1.5" stroke="#CCD5F0" stroke-width="2.2"/></svg>
<svg class="a" style="left:1472px;top:104px" width="17" height="13" viewBox="0 0 17 13"><path d="M0 10.5 H12 M2.5 10.5 V7.5 H12.5 V10.5" fill="none" stroke="#1E1E1E" stroke-width="1.1"/><path d="M13 5 L15 3 M14 7.5 H16.5 M11.5 3.5 V1" stroke="#1E1E1E" stroke-width="0.9"/></svg>
<div class="a" style="left:1494px;top:100px;width:1px;height:20px;background:#A4ADC8"></div>
<svg class="a" style="left:1502px;top:102px" width="16" height="16" viewBox="0 0 16 16"><path d="M5.5 0.5 H12.5 L15.5 3.5 V12.5 H5.5 Z" fill="#E6E9F2" stroke="#1E1E1E"/><path d="M7 3.5 H12 M7 5.5 H13 M7 7.5 H13 M7 9.5 H12" stroke="#1E1E1E" stroke-width="1"/><rect x="0.5" y="8.5" width="6" height="7" fill="#E6E9F2" stroke="#1E1E1E"/></svg>
<svg class="a" style="left:1524px;top:103px" width="15" height="15" viewBox="0 0 15 15"><g fill="none" stroke="#1E1E1E" stroke-width="1"><rect x="1.5" y="1.5" width="2" height="2"/><rect x="1.5" y="6.5" width="2" height="2"/><rect x="1.5" y="11.5" width="2" height="2"/><rect x="6.5" y="6.5" width="2" height="2"/><rect x="6.5" y="11.5" width="2" height="2"/><rect x="11.5" y="11.5" width="2" height="2"/><rect x="9.5" y="3.5" width="2" height="2"/></g></svg>
<svg class="a" style="left:1546px;top:102px" width="16" height="16" viewBox="0 0 16 16"><path d="M6.5 0.5 H12.5 L15.5 3.5 V10.5 H6.5 Z" fill="#E6E9F2" stroke="#1E1E1E"/><path d="M8 3.5 H12 M8 5.5 H13 M8 7.5 H13 M8 9.5 H12" stroke="#1E1E1E" stroke-width="1"/><path d="M0 11.5 H4 M0 13.5 H4 M0 15.5 H4" stroke="#1E1E1E"/><path d="M4.5 1.5 C2.5 2.5 2.5 5 3 7.5 M1 6 L3 8 L5 6" fill="none" stroke="#1E1E1E" stroke-width="1"/></svg>
<svg class="a" style="left:1568px;top:102px" width="17" height="17" viewBox="0 0 17 17"><path d="M6.5 0.5 H12.5 L15.5 3.5 V10.5 H6.5 Z" fill="#E6E9F2" stroke="#1E1E1E"/><path d="M8 3.5 H12 M8 5.5 H13 M8 7.5 H13 M8 9.5 H12" stroke="#1E1E1E" stroke-width="1"/><circle cx="5" cy="10" r="2.5" fill="#E6E9F2" stroke="#1E1E1E"/><path d="M0.5 16.5 C1 14 2.5 13 5 13 C7.5 13 9 14 9.5 16.5" fill="none" stroke="#1E1E1E"/></svg>
<svg class="a" style="left:1590px;top:102px" width="17" height="17" viewBox="0 0 17 17"><path d="M0.5 1.5 H7.5 L10.5 4.5 V12.5 H0.5 Z" fill="#E6E9F2" stroke="#1E1E1E"/><path d="M2 4.5 H7 M2 6.5 H8 M2 8.5 H8 M2 10.5 H7" stroke="#1E1E1E" stroke-width="1"/><path d="M8 15.5 L15 8 L16.5 9.5 L9.5 16.5 L7.5 16.8 Z" fill="#5A8ED8" stroke="#2D66C4" stroke-width="0.6"/></svg>
<svg class="a" style="left:1612px;top:102px" width="17" height="17" viewBox="0 0 17 17"><path d="M6.5 0.5 H12.5 L15.5 3.5 V10.5 H6.5 Z" fill="#E6E9F2" stroke="#1E1E1E"/><path d="M8 3.5 H12 M8 5.5 H13 M8 7.5 H13 M8 9.5 H12" stroke="#1E1E1E" stroke-width="1"/><path d="M0.5 8.5 H9.5 L6 12 V16 L4 15 V12 Z" fill="#6AAAE8" stroke="#3A7AC8" stroke-width="0.8"/></svg>
<div class="t" style="left:1265px;top:129px;font-size:12px;color:#6D6D6D">搜索解决方案资源管理器(Ctrl+;)</div>
<div class="a" style="left:1900px;top:125px;width:1px;height:21px;background:#8A93A8"></div>
<svg class="a" style="left:1885px;top:128px" width="14" height="14" viewBox="0 0 14 14"><circle cx="8.5" cy="5.5" r="4" fill="none" stroke="#444" stroke-width="1.5"/><path d="M5.8 8.2 L1.5 12.5" stroke="#444" stroke-width="2"/></svg>
<svg class="a" style="left:1903px;top:134px" width="6" height="4"><path d="M0 0 H6 L3 4 Z" fill="#1E1E1E"/></svg>
<div class="a" style="left:1262px;top:289px;width:634px;height:19px;background:#E6E7EE"></div>
<svg class="a" style="left:1275px;top:152px" width="16" height="15" viewBox="0 0 16 15"><path d="M6 14.5 H0.5 V0.5 H14.5 V7" fill="none" stroke="#4A4E60"/><rect x="1" y="1" width="13" height="2" fill="#4A4E60"/><path d="M7 9 L9 11 L7 13 Z M9 11 L13.5 7 V15 Z" fill="#7356B8"/></svg>
<div class="t" style="left:1295px;top:153px;font-size:12.5px;color:#1E1E1E">解决方案 'mainwindows' (7 个项目，共 7 个)</div>
<svg class="a" style="left:1271px;top:174px" width="6" height="10"><path d="M0.5 0.5 L5.5 5 L0.5 9.5 Z" fill="none" stroke="#1E1E1E"/></svg>
<svg class="a" style="left:1293px;top:173px" width="14" height="13" viewBox="0 0 14 13"><rect x="0.5" y="0.5" width="13" height="12" fill="#E8EAF4" stroke="#4A4E60"/><path d="M2 4.5 H7 M4.5 2 V7 M6.5 8.5 H11.5 M9 6 V11" stroke="#3A2E48" stroke-width="1"/></svg>
<div class="t" style="left:1313px;top:173px;font-size:13px;font-weight:bold;color:#1E1E1E">application</div>
<svg class="a" style="left:1271px;top:194px" width="6" height="10"><path d="M0.5 0.5 L5.5 5 L0.5 9.5 Z" fill="none" stroke="#1E1E1E"/></svg>
<svg class="a" style="left:1293px;top:193px" width="14" height="13" viewBox="0 0 14 13"><rect x="0.5" y="0.5" width="13" height="12" fill="#E8EAF4" stroke="#4A4E60"/><path d="M2 4.5 H7 M4.5 2 V7 M6.5 8.5 H11.5 M9 6 V11" stroke="#3A2E48" stroke-width="1"/></svg>
<div class="t" style="left:1313px;top:193px;font-size:13px;color:#1E1E1E">dockwidgets</div>
<svg class="a" style="left:1271px;top:214px" width="6" height="10"><path d="M0.5 0.5 L5.5 5 L0.5 9.5 Z" fill="none" stroke="#1E1E1E"/></svg>
<svg class="a" style="left:1293px;top:213px" width="14" height="13" viewBox="0 0 14 13"><rect x="0.5" y="0.5" width="13" height="12" fill="#E8EAF4" stroke="#4A4E60"/><path d="M2 4.5 H7 M4.5 2 V7 M6.5 8.5 H11.5 M9 6 V11" stroke="#3A2E48" stroke-width="1"/></svg>
<div class="t" style="left:1313px;top:213px;font-size:13px;color:#1E1E1E">mainwindow</div>
<svg class="a" style="left:1271px;top:234px" width="6" height="10"><path d="M0.5 0.5 L5.5 5 L0.5 9.5 Z" fill="none" stroke="#1E1E1E"/></svg>
<svg class="a" style="left:1293px;top:233px" width="14" height="13" viewBox="0 0 14 13"><rect x="0.5" y="0.5" width="13" height="12" fill="#E8EAF4" stroke="#4A4E60"/><path d="M2 4.5 H7 M4.5 2 V7 M6.5 8.5 H11.5 M9 6 V11" stroke="#3A2E48" stroke-width="1"/></svg>
<div class="t" style="left:1313px;top:233px;font-size:13px;color:#1E1E1E">mdi</div>
<svg class="a" style="left:1271px;top:254px" width="6" height="10"><path d="M0.5 0.5 L5.5 5 L0.5 9.5 Z" fill="none" stroke="#1E1E1E"/></svg>
<svg class="a" style="left:1293px;top:253px" width="14" height="13" viewBox="0 0 14 13"><rect x="0.5" y="0.5" width="13" height="12" fill="#E8EAF4" stroke="#4A4E60"/><path d="M2 4.5 H7 M4.5 2 V7 M6.5 8.5 H11.5 M9 6 V11" stroke="#3A2E48" stroke-width="1"/></svg>
<div class="t" style="left:1313px;top:253px;font-size:13px;color:#1E1E1E">menus</div>
<svg class="a" style="left:1271px;top:274px" width="6" height="10"><path d="M0.5 0.5 L5.5 5 L0.5 9.5 Z" fill="none" stroke="#1E1E1E"/></svg>
<svg class="a" style="left:1293px;top:273px" width="14" height="13" viewBox="0 0 14 13"><rect x="0.5" y="0.5" width="13" height="12" fill="#E8EAF4" stroke="#4A4E60"/><path d="M2 4.5 H7 M4.5 2 V7 M6.5 8.5 H11.5 M9 6 V11" stroke="#3A2E48" stroke-width="1"/></svg>
<div class="t" style="left:1313px;top:273px;font-size:13px;color:#1E1E1E">sdi</div>
<svg class="a" style="left:1270px;top:295px" width="7" height="7"><path d="M7 0 V7 H0 Z" fill="#1E1E1E"/></svg>
<svg class="a" style="left:1292px;top:291px" width="17" height="17" viewBox="0 0 17 17"><rect x="0.5" y="0.5" width="13" height="12" fill="#F4F7FD" stroke="#5A6478"/><rect x="1" y="1" width="12" height="2" fill="#8AA4D8"/><circle cx="11" cy="11" r="5" fill="#C8C8C0" stroke="#5A6478"/><path d="M8.5 11 L11 8 L13 11 L11 14 Z" fill="#E0B030"/></svg>
<div class="t" style="left:1313px;top:293px;font-size:12.5px;color:#1E1E1E">记事本</div>
<svg class="a" style="left:1310px;top:312px" width="16" height="14" viewBox="0 0 16 14"><defs><linearGradient id="fg" x1="0" y1="0" x2="1" y2="1"><stop offset="0" stop-color="#FBE7A8"/><stop offset="1" stop-color="#E89A3C"/></linearGradient></defs><path d="M0.5 1.5 H5 L6.5 3 H14.5 V13.5 H0.5 Z" fill="#E8C070" stroke="#A08048"/><rect x="1" y="4" width="13" height="9" fill="url(#fg)"/></svg>
<div class="t" style="left:1331px;top:313px;font-size:13px;color:#1E1E1E">Detected Dependencies</div>
<div class="a" style="left:1262px;top:330px;width:634px;height:7px;overflow:hidden">
<svg class="a" style="left:50px;top:2px" width="13" height="12"><rect x="0.5" y="0.5" width="11" height="11" fill="#F4F7FD" stroke="#5A6478"/></svg>
<div class="t" style="left:69px;top:3px;font-size:13px;color:#1E1E1E">application Build Output</div></div>
<div class="a" style="left:1897px;top:147px;width:15px;height:190px;background:#F0F2F8"></div>
<svg class="a" style="left:1900px;top:154px" width="9" height="5"><path d="M0 5 L4.5 0 L9 5 Z" fill="#8A8E98"/></svg>
<div class="a" style="left:1900px;top:165px;width:9px;height:22px;background:#C2C3C9"></div>
<svg class="a" style="left:1900px;top:325px" width="9" height="5"><path d="M0 0 L4.5 5 L9 0 Z" fill="#8A8E98"/></svg>
<div class="t" style="left:1265px;top:341px;font-size:12px;color:#1E1E1E">解决方案资源管理器</div>
<div class="t" style="left:1385px;top:341px;font-size:12px;color:#E4E8F8">Git 更改</div>

<!-- properties -->
<div class="a" style="left:1260px;top:366px;width:653px;height:23px;background:#F5CC84"></div>
<div class="a" style="left:1260px;top:389px;width:653px;height:25px;background:#FBFCFE"></div>
<div class="a" style="left:1260px;top:414px;width:653px;height:25px;background:#CCD5F0"></div>
<div class="a" style="left:1260px;top:439px;width:653px;height:561px;background:#F6F7FC"></div>

<!-- PROP CONTENT -->
<div class="t" style="left:1265px;top:371px;font-size:12px;color:#1E1E1E">属性</div>
<svg class="a" style="left:1860px;top:375px" width="8" height="5"><path d="M0 0 H8 L4 5 Z" fill="#1E1E1E"/></svg>
<svg class="a" style="left:1877px;top:371px" width="10" height="12" viewBox="0 0 10 12"><path d="M2.5 0.5 H7.5 M3 0.5 V7 M7 0.5 V7 M1 7.5 H9 M5 7.5 V12" fill="none" stroke="#1E1E1E" stroke-width="1.1"/></svg>
<svg class="a" style="left:1895px;top:372px" width="10" height="10" viewBox="0 0 10 10"><path d="M1 1 L9 9 M9 1 L1 9" stroke="#1E1E1E" stroke-width="1.6"/></svg>
<div class="t" style="left:1266px;top:395px;font-size:12px;font-weight:bold;color:#1E1E1E">记事本</div>
<div class="t" style="left:1308px;top:394px;font-size:13px;color:#1E1E1E">Deployment Project Properties</div>
<svg class="a" style="left:1903px;top:399px" width="6" height="4"><path d="M0 0 H6 L3 4 Z" fill="#1E1E1E"/></svg>
<div class="a" style="left:1262px;top:414px;width:20px;height:24px;background:#C4CCE0"></div>
<svg class="a" style="left:1267px;top:419px" width="14" height="14" viewBox="0 0 14 14"><g fill="#1E1E1E"><rect x="0" y="0" width="4" height="4"/><rect x="0" y="8" width="4" height="4"/><rect x="6" y="0" width="8" height="1"/><rect x="6" y="3" width="8" height="1"/><rect x="6" y="5.5" width="8" height="1"/><rect x="6" y="8" width="8" height="1"/><rect x="6" y="11" width="6" height="1"/></g><rect x="1" y="1.5" width="2" height="1" fill="#fff"/><rect x="1" y="9.5" width="2" height="1" fill="#fff"/></svg>
<div class="a" style="left:1286px;top:415px;width:23px;height:22px;background:#FCF1D4;border:1px solid #8C7A50"></div>
<div class="t" style="left:1291px;top:419px;font-size:8px;font-weight:bold;color:#1E1E1E;line-height:0.85">A<br>Z</div>
<svg class="a" style="left:1298px;top:420px" width="7" height="13"><path d="M3.5 0 V10 M0.5 7 L3.5 11 L6.5 7" fill="none" stroke="#2D78D0" stroke-width="2"/></svg>
<div class="a" style="left:1313px;top:417px;width:1px;height:19px;background:#A4ADC8"></div>
<svg class="a" style="left:1319px;top:418px" width="15" height="15" viewBox="0 0 15 15"><path d="M1.5 13.5 L8 7" stroke="#1E1E1E" stroke-width="2.5" stroke-linecap="round"/><circle cx="10" cy="5" r="3.8" fill="#1E1E1E"/><path d="M10 5 L13 2" stroke="#CCD5F0" stroke-width="2.2"/></svg>
<div class="a" style="left:1262px;top:440px;width:13px;height:456px;background:#F0F2F7"></div>
<div class="t" style="left:1279px;top:444px;font-size:13px;color:#1E1E1E">AddRemoveProgramsIcon</div>
<div class="t" style="left:1576px;top:444px;font-size:13px;color:#1E1E1E">(None)</div>
<div class="t" style="left:1279px;top:463px;font-size:13px;color:#1E1E1E">Author</div>
<div class="t" style="left:1576px;top:463px;font-size:13px;color:#1E1E1E">Default Company Name</div>
<div class="t" style="left:1279px;top:482px;font-size:13px;color:#1E1E1E">BackwardCompatibleIDGeneration</div>
<div class="t" style="left:1576px;top:482px;font-size:13px;color:#1E1E1E">False</div>
<div class="t" style="left:1279px;top:501px;font-size:13px;color:#1E1E1E">Description</div>
<div class="t" style="left:1279px;top:520px;font-size:13px;color:#1E1E1E">DetectNewerInstalledVersion</div>
<div class="t" style="left:1576px;top:520px;font-size:13px;color:#1E1E1E">True</div>
<div class="t" style="left:1279px;top:539px;font-size:13px;color:#1E1E1E">InstallAllUsers</div>
<div class="t" style="left:1576px;top:539px;font-size:13px;color:#1E1E1E">True</div>
<div class="t" style="left:1279px;top:558px;font-size:13px;color:#1E1E1E">Keywords</div>
<div class="t" style="left:1279px;top:577px;font-size:13px;color:#1E1E1E">Localization</div>
<div class="t" style="left:1576px;top:577px;font-size:13px;color:#1E1E1E">Chinese (Simplified)</div>
<div class="t" style="left:1279px;top:596px;font-size:13px;color:#1E1E1E">Manufacturer</div>
<div class="t" style="left:1576px;top:596px;font-size:13px;color:#1E1E1E">Default Company Name</div>
<div class="t" style="left:1279px;top:615px;font-size:13px;color:#1E1E1E">ManufacturerUrl</div>
<div class="t" style="left:1279px;top:634px;font-size:13px;color:#1E1E1E">PostBuildEvent</div>
<div class="t" style="left:1279px;top:653px;font-size:13px;color:#1E1E1E">PreBuildEvent</div>
<div class="t" style="left:1279px;top:672px;font-size:13px;color:#1E1E1E">ProductCode</div>
<div class="t" style="left:1576px;top:672px;font-size:12.2px;color:#1E1E1E">{018FCAC4-408C-4837-8D0F-CD6F50AA0346}</div>
<div class="t" style="left:1279px;top:691px;font-size:13px;color:#1E1E1E">ProductName</div>
<div class="t" style="left:1576px;top:691px;font-size:12.5px;color:#1E1E1E">记事本</div>
<div class="t" style="left:1279px;top:710px;font-size:13px;color:#1E1E1E">RemovePreviousVersions</div>
<div class="t" style="left:1576px;top:710px;font-size:13px;color:#1E1E1E">True</div>
<div class="t" style="left:1279px;top:729px;font-size:13px;color:#1E1E1E">RunPostBuildEvent</div>
<div class="t" style="left:1576px;top:729px;font-size:13px;color:#1E1E1E">On successful build</div>
<div class="t" style="left:1279px;top:748px;font-size:13px;color:#1E1E1E">SearchPath</div>
<div class="t" style="left:1279px;top:767px;font-size:13px;color:#1E1E1E">Subject</div>
<div class="t" style="left:1279px;top:786px;font-size:13px;color:#1E1E1E">SupportPhone</div>
<div class="t" style="left:1279px;top:805px;font-size:13px;color:#1E1E1E">SupportUrl</div>
<div class="a" style="left:1275px;top:821px;width:297px;height:18px;background:#0078D7"></div>
<div class="t" style="left:1279px;top:824px;font-size:13px;color:#FFFFFF">TargetPlatform</div>
<div class="t" style="left:1576px;top:824px;font-size:13px;color:#1E1E1E">x64</div>
<div class="t" style="left:1279px;top:843px;font-size:13px;color:#1E1E1E">Title</div>
<div class="t" style="left:1279px;top:862px;font-size:13px;color:#1E1E1E">UpgradeCode</div>
<div class="t" style="left:1279px;top:881px;font-size:13px;color:#1E1E1E">Version</div>
<div class="a" style="left:1895px;top:821px;width:16px;height:18px;background:#FCFDFF;border:1px solid #B8BCC8"></div>
<svg class="a" style="left:1899px;top:828px" width="9" height="5"><path d="M0.5 0.5 L4.5 4.5 L8.5 0.5" fill="none" stroke="#444" stroke-width="1"/></svg>
<div class="a" style="left:1571px;top:840px;width:341px;height:69px;background:#F8F9FC;border:1px solid #646464"></div>
<div class="t" style="left:1574px;top:844px;font-size:13px;color:#1E1E1E">x86</div>
<div class="a" style="left:1572px;top:861px;width:339px;height:21px;background:#0078D7;border:1px dotted #000"></div>
<div class="t" style="left:1574px;top:864px;font-size:13px;color:#E8F4FF">x64</div>
<div class="t" style="left:1574px;top:884px;font-size:13px;color:#1E1E1E">Itanium</div>
<div class="a" style="left:1262px;top:936px;width:650px;height:2px;background:#EEF0F5"></div>
<div class="t" style="left:1266px;top:946px;font-size:13.3px;font-weight:bold;color:#000">TargetPlatform</div>
<div class="t" style="left:1266px;top:964px;font-size:13.3px;color:#1E1E1E">Specifies the target platform of the installer</div>

<!-- status bar -->
<div class="a" style="left:0;top:1003px;width:1920px;height:2px;background:#56649A"></div>
<div class="a" style="left:0;top:1005px;width:1920px;height:9px;background:#404D88"></div>
<div class="a" style="left:4px;top:1010px;width:16px;height:6px;border:1px solid #E0E4F4"></div>
<svg class="a" style="left:1630px;top:1010px" width="10" height="4"><path d="M1 4 L5 0.5 L9 4" fill="none" stroke="#E8ECF8" stroke-width="1.2"/></svg>
<div class="a" style="left:1783px;top:1012px;width:14px;height:2px;background:#E8ECF8"></div>
<svg class="a" style="left:1888px;top:1010px" width="10" height="4"><path d="M1 4 L5 0.5 L9 4" fill="none" stroke="#E8ECF8" stroke-width="1.2"/></svg>
</body></html>
